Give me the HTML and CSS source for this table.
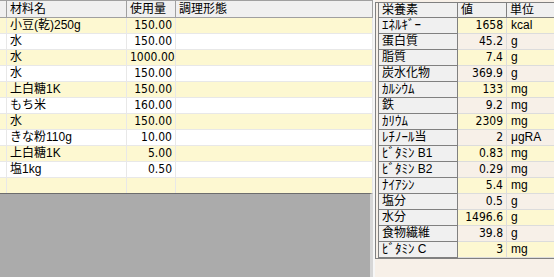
FILE: index.html
```html
<!DOCTYPE html>
<html lang="ja">
<head>
<meta charset="utf-8">
<title>材料</title>
<link rel="stylesheet" href="styles.css">
</head>
<body>
<div class="app">
  <div class="left">
    <div class="lhdr">
      <div class="c rh"></div>
      <div class="c">材料名</div>
      <div class="c">使用量</div>
      <div class="c">調理形態</div>
    </div>
    <div class="lrow y"><div class="c rh"></div><div class="c">小豆(乾)250g</div><div class="c num">150.00</div><div class="c"></div></div>
    <div class="lrow"><div class="c rh"></div><div class="c">水</div><div class="c num">150.00</div><div class="c"></div></div>
    <div class="lrow y"><div class="c rh"></div><div class="c">水</div><div class="c num">1000.00</div><div class="c"></div></div>
    <div class="lrow"><div class="c rh"></div><div class="c">水</div><div class="c num">150.00</div><div class="c"></div></div>
    <div class="lrow y"><div class="c rh"></div><div class="c">上白糖1K</div><div class="c num">150.00</div><div class="c"></div></div>
    <div class="lrow"><div class="c rh"></div><div class="c">もち米</div><div class="c num">160.00</div><div class="c"></div></div>
    <div class="lrow y"><div class="c rh"></div><div class="c">水</div><div class="c num">150.00</div><div class="c"></div></div>
    <div class="lrow"><div class="c rh"></div><div class="c">きな粉110g</div><div class="c num">10.00</div><div class="c"></div></div>
    <div class="lrow y"><div class="c rh"></div><div class="c">上白糖1K</div><div class="c num">5.00</div><div class="c"></div></div>
    <div class="lrow"><div class="c rh"></div><div class="c">塩1kg</div><div class="c num">0.50</div><div class="c"></div></div>
    <div class="lrow y last"><div class="c rh"></div><div class="c"></div><div class="c num"></div><div class="c"></div></div>
    <div class="empty"></div>
  </div>
  <div class="split"></div>
  <div class="right">
    <div class="ntable">
      <div class="nhdr">
        <div class="c name">栄養素</div>
        <div class="c">値</div>
        <div class="c">単位</div>
      </div>
      <div class="nrow y"><div class="c name"><span class="hw">ｴﾈﾙｷﾞｰ</span></div><div class="c num">1658</div><div class="c unit">kcal</div></div>
      <div class="nrow"><div class="c name">蛋白質</div><div class="c num">45.2</div><div class="c unit">g</div></div>
      <div class="nrow y"><div class="c name">脂質</div><div class="c num">7.4</div><div class="c unit">g</div></div>
      <div class="nrow"><div class="c name">炭水化物</div><div class="c num">369.9</div><div class="c unit">g</div></div>
      <div class="nrow y"><div class="c name"><span class="hw">ｶﾙｼｳﾑ</span></div><div class="c num">133</div><div class="c unit">mg</div></div>
      <div class="nrow"><div class="c name">鉄</div><div class="c num">9.2</div><div class="c unit">mg</div></div>
      <div class="nrow y"><div class="c name"><span class="hw">ｶﾘｳﾑ</span></div><div class="c num">2309</div><div class="c unit">mg</div></div>
      <div class="nrow"><div class="c name"><span class="hw">ﾚﾁﾉｰﾙ</span>当</div><div class="c num">2</div><div class="c unit">μgRA</div></div>
      <div class="nrow y"><div class="c name"><span class="hw">ﾋﾞﾀﾐﾝ</span> B1</div><div class="c num">0.83</div><div class="c unit">mg</div></div>
      <div class="nrow"><div class="c name"><span class="hw">ﾋﾞﾀﾐﾝ</span> B2</div><div class="c num">0.29</div><div class="c unit">mg</div></div>
      <div class="nrow y"><div class="c name"><span class="hw">ﾅｲｱｼﾝ</span></div><div class="c num">5.4</div><div class="c unit">mg</div></div>
      <div class="nrow"><div class="c name">塩分</div><div class="c num">0.5</div><div class="c unit">g</div></div>
      <div class="nrow y"><div class="c name">水分</div><div class="c num">1496.6</div><div class="c unit">g</div></div>
      <div class="nrow"><div class="c name">食物繊維</div><div class="c num">39.8</div><div class="c unit">g</div></div>
      <div class="nrow y"><div class="c name"><span class="hw">ﾋﾞﾀﾐﾝ</span> C</div><div class="c num">3</div><div class="c unit">mg</div></div>
    </div>
  </div>
</div>
</body>
</html>
```
FILE: styles.css
```css
* { box-sizing: border-box; }
html, body {
  margin: 0;
  padding: 0;
  width: 554px;
  height: 277px;
  overflow: hidden;
  background: #f7f0e8;
}
body {
  font-family: "Liberation Sans", "Noto Sans CJK JP", sans-serif;
  font-size: 12px;
  color: #000;
}
.app {
  display: flex;
  width: 554px;
  height: 277px;
}
.left {
  width: 373px;
  height: 277px;
  display: flex;
  flex-direction: column;
  background: #fff;
}
.lhdr, .lrow {
  display: grid;
  grid-template-columns: 7px 120px 49px 1fr;
}
.lhdr {
  height: 18px;
  background: #f0f0f0;
  border-top: 1px solid #a0a0a0;
  border-bottom: 1px solid #a0a0a0;
}
.lhdr .c {
  border-right: 1px solid #a0a0a0;
  line-height: 16px;
  padding-left: 3px;
  white-space: nowrap;
  overflow: hidden;
}
.lrow {
  height: 16px;
  border-bottom: 1px solid #e8e8e8;
}
.lrow .c {
  border-right: 1px solid #e8e8e8;
  line-height: 15px;
  padding: 0 3px;
  white-space: nowrap;
  overflow: hidden;
}
.lrow.last { height: 15px; border-bottom: none; }
.y { background: #fdf8d1; }
.num {
  text-align: right;
  font-family: "Liberation Sans Narrow", "DejaVu Sans Condensed", "Liberation Sans", sans-serif;
}
.empty {
  flex: 1;
  background: #ababab;
  border-top: 1px solid #6d6d6d;
  border-right: 3px solid #d6d6d6;
}
.split {
  width: 2px;
  background: #f6f6f6;
}
.right {
  flex: 1;
  overflow: hidden;
  padding-top: 2px;
}
.ntable {
  width: 260px;
  border-top: 1px solid #808080;
  border-left: 1px solid #808080;
  padding-left: 2px;
  border-bottom: 1px solid #808080;
}
.nhdr, .nrow {
  display: grid;
  grid-template-columns: 80px 49px 120px;
}
.nhdr {
  height: 15px;
  background: #f0f0f0;
}
.nhdr .c {
  border-right: 1px solid #808080;
  border-bottom: 1px solid #808080;
  line-height: 14px;
  padding-left: 3px;
}
.nrow { height: 16px; }
.nrow .c {
  line-height: 15px;
  border-bottom: 1px solid #dcdcdc;
  border-right: 1px solid #dcdcdc;
  padding: 0 3px;
  white-space: nowrap;
  overflow: hidden;
}
.nrow .c.name {
  background: #f0f0f0;
  border-bottom: 1px solid #808080;
  border-right: 1px solid #808080;
  border-left: 1px solid #808080;
}
.nhdr .c.name { border-left: 1px solid #808080; }
.nrow .c.unit { padding-left: 4px; }
.hw {
  font-size: 13px;
  line-height: 12px;
}
```
